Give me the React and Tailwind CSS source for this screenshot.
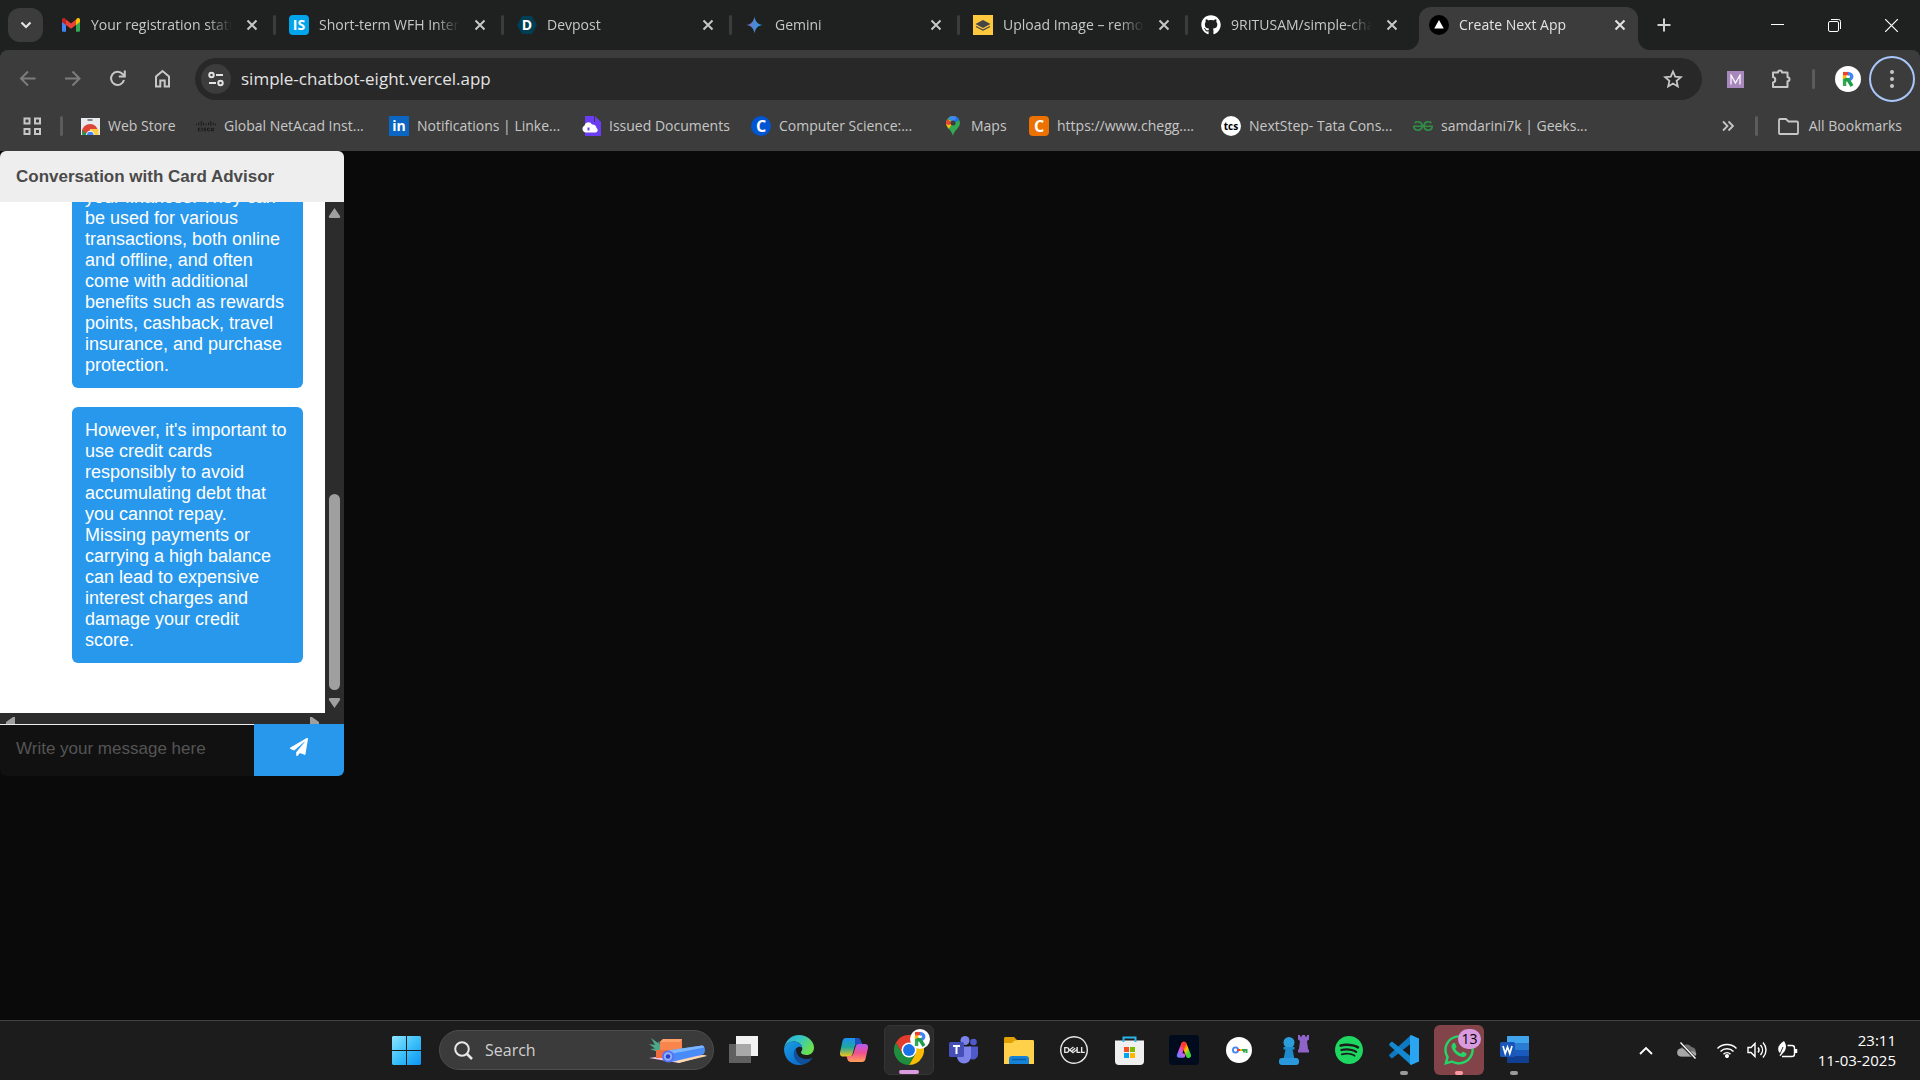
import { useState } from 'react';
import { FaGithub, FaPaperPlane, FaWhatsapp } from 'react-icons/fa';
import { SiCisco, SiDell, SiGeeksforgeeks, SiSpotify } from 'react-icons/si';

// ---------- small shared bits ----------

function CloseIcon({ className = '' }) {
  return (
    <svg width="12" height="12" viewBox="0 0 12 12" className={className} stroke="currentColor" strokeWidth="2">
      <path d="M1.5 1.5l9 9M10.5 1.5l-9 9" />
    </svg>
  );
}

function LetterIcon({ letter, className = '' }) {
  return (
    <span className={`flex size-5 items-center justify-center font-bold leading-none text-white ${className}`}>
      {letter}
    </span>
  );
}

function ChromeLogo({ size = 30 }) {
  return (
    <svg width={size} height={size} viewBox="0 0 48 48">
      <path d="M24 12H44.8A24 24 0 0 1 24 48L34.4 30z" fill="#fbbc04" />
      <path d="M13.6 30L3.2 12A24 24 0 0 0 24 48L34.4 30z" fill="#1e8e3e" />
      <path d="M3.2 12A24 24 0 0 1 44.8 12H24L13.6 30z" fill="#e33b2e" />
      <circle cx="24" cy="24" r="12" fill="#fff" />
      <circle cx="24" cy="24" r="9.5" fill="#1a73e8" />
    </svg>
  );
}

function ProfileBadge({ className = '' }) {
  return (
    <span className={`flex items-center justify-center rounded-full bg-white ${className}`}>
      <svg width="12" height="16" viewBox="0 0 12 16" fill="none" strokeWidth="3.4">
        <path d="M2.6 15V6" stroke="#34a853" />
        <path d="M2.6 8V2" stroke="#fbbc04" />
        <path d="M1 2.6h6" stroke="#ea4335" />
        <path d="M6 2.6c5 0 5 6 0 6" stroke="#4285f4" />
        <path d="M2.6 8.8H6l4 6.2" stroke="#1e9e4a" />
      </svg>
    </span>
  );
}

// ---------- tab strip ----------

function GmailIcon() {
  return (
    <svg width="20" height="20" viewBox="0 0 20 20">
      <path d="M1 5v10.5c0 .8.5 1.3 1.3 1.3H5V8z" fill="#4285f4" />
      <path d="M19 5v10.5c0 .8-.5 1.3-1.3 1.3H15V8z" fill="#34a853" />
      <path d="M15 4.8V10l4-3V5c0-2-2-2.5-3.2-1.5z" fill="#fbbc04" />
      <path d="M1 7l4 3V4.8l-.8-1.3C3 2.5 1 3 1 5z" fill="#c5221f" />
      <path d="M5 10V4.600l5 3.800 5-3.800V10l-5 3.800z" fill="#ea4335" />
    </svg>
  );
}

function DevpostIcon() {
  return (
    <svg width="20" height="20" viewBox="0 0 20 20">
      <path d="M5 1h10l5 9-5 9H5l-5-9z" fill="#003e54" />
      <text x="10" y="15" textAnchor="middle" fontFamily="Open Sans" fontWeight="700" fontSize="14" fill="#fff">D</text>
    </svg>
  );
}

function GeminiIcon() {
  return (
    <svg width="20" height="20" viewBox="0 0 20 20">
      <defs>
        <linearGradient id="gemini" x1="0" x2="1">
          <stop offset="0" stopColor="#9168c0" />
          <stop offset=".4" stopColor="#5684d1" />
          <stop offset="1" stopColor="#1ba1e3" />
        </linearGradient>
      </defs>
      <path d="M9.5 1.5c.6 5 3.5 8 8.5 8.5-5 .5-7.9 3.5-8.5 8.5C8.900 13.500 6 10.500 1 10c5-.5 7.900-3.500 8.500-8.500z" fill="url(#gemini)" />
    </svg>
  );
}

function LayersIcon() {
  return (
    <svg width="20" height="20" viewBox="0 0 20 20">
      <path d="M0 0h20v20H0z" fill="#ffc83d" />
      <path d="M10 5l7.5 4-7.5 4-7.5-4z" fill="#454545" />
      <path d="M3 11.5l7 3.500 7-3.500" fill="none" stroke="#454545" strokeWidth="1.2" />
    </svg>
  );
}

function NextIcon() {
  return (
    <svg width="20" height="20" viewBox="0 0 20 20">
      <circle cx="10" cy="10" r="10" fill="#000" />
      <path d="M10 5l4.800 8.500H5.200z" fill="#fff" />
    </svg>
  );
}

const tabs = [
  { title: 'Your registration status', icon: <GmailIcon /> },
  { title: 'Short-term WFH Intern', icon: <LetterIcon letter="IS" className="rounded bg-[#00a5ec] text-sm" /> },
  { title: 'Devpost', icon: <DevpostIcon /> },
  { title: 'Gemini', icon: <GeminiIcon /> },
  { title: 'Upload Image – remo', icon: <LayersIcon /> },
  { title: '9RITUSAM/simple-cha', icon: <FaGithub size={20} className="text-white" /> },
  { title: 'Create Next App', icon: <NextIcon />, active: true },
];

function Tab({ title, icon, active, last }) {
  return (
    <div className="relative flex h-[43px] w-[228px] min-w-0 items-center pl-[3px]">
      {active && (
        <>
          <svg width="12" height="12" viewBox="0 0 12 12" className="absolute bottom-0 -left-[9px]">
            <path d="M12 0v12H0A12 12 0 0 0 12 0z" fill="#3c3c3c" />
          </svg>
          <svg width="12" height="12" viewBox="0 0 12 12" className="absolute bottom-0 -right-[6px]">
            <path d="M0 0v12h12A12 12 0 0 1 0 0z" fill="#3c3c3c" />
          </svg>
        </>
      )}
      <div className={`flex h-full w-[219px] items-center pr-2 pb-[7px] pl-[10px] ${active ? 'rounded-t-xl bg-[#3c3c3c] text-[#e3e3e3]' : 'text-[#c7c7c7]'}`}>
        <span className="w-5 shrink-0">{icon}</span>
        <span className="ml-[10px] w-[141px] overflow-hidden text-sm whitespace-nowrap [mask-image:linear-gradient(to_right,black_82%,transparent)]">
          {title}
        </span>
        <button aria-label="Close tab" className="ml-auto flex size-5 items-center justify-center">
          <CloseIcon />
        </button>
      </div>
      {!active && !last && <span className="mb-2 ml-auto h-5 w-[3px] shrink-0 rounded bg-[#3c3c3c]" />}
    </div>
  );
}

function TabStrip() {
  return (
    <div className="flex h-[50px] items-end bg-[#1f2120]">
      <button aria-label="Search tabs" className="mr-[5px] mb-2 ml-2 flex h-[34px] w-[35px] shrink-0 items-center justify-center rounded-xl bg-[#3c3c3c] text-[#e3e3e3]">
        <svg width="12" height="8" viewBox="0 0 12 8" fill="none" stroke="currentColor" strokeWidth="2.2">
          <path d="M1.5 1.5L6 6l4.500-4.500" />
        </svg>
      </button>
      {tabs.map((t, i) => (
        <Tab key={t.title} {...t} last={i === 5} />
      ))}
      <button aria-label="New tab" className="mb-2 ml-[3px] flex size-[34px] shrink-0 items-center justify-center text-[#d0d0d0]">
        <svg width="14" height="14" viewBox="0 0 14 14" stroke="currentColor" strokeWidth="2">
          <path d="M7 .5v13M.5 7h13" />
        </svg>
      </button>
      <div className="ml-auto flex h-full items-center text-white">
        <button aria-label="Minimize" className="flex h-full w-[57px] items-center justify-center">
          <svg width="13" height="13" viewBox="0 0 13 13" stroke="currentColor"><path d="M0 5.500h13" /></svg>
        </button>
        <button aria-label="Restore" className="flex h-full w-[57px] items-center justify-center">
          <svg width="13" height="13" viewBox="0 0 13 13" fill="none" stroke="currentColor">
            <rect x=".5" y="2.5" width="10" height="10" rx="1.5" />
            <path d="M3 .5h7.500a2 2 0 0 1 2 2V10" />
          </svg>
        </button>
        <button aria-label="Close window" className="flex h-full w-[57px] items-center justify-center">
          <svg width="13" height="13" viewBox="0 0 13 13" stroke="currentColor" strokeWidth="1.2"><path d="M0 0l13 13M13 0L0 13" /></svg>
        </button>
      </div>
    </div>
  );
}

// ---------- toolbar ----------

function NavButton({ label, dim, children }) {
  return (
    <button
      aria-label={label}
      className={`flex h-11 w-[45px] shrink-0 items-center justify-center ${dim ? 'text-[#7c7c7c]' : 'text-[#c7c7c7]'}`}
    >
      <svg width="20" height="20" viewBox="0 0 20 20" fill="none" stroke="currentColor" strokeWidth="2">
        {children}
      </svg>
    </button>
  );
}

function AddressRow() {
  const [url, setUrl] = useState('simple-chatbot-eight.vercel.app');
  return (
    <div className="flex h-[58px] items-center px-[5px]">
      <NavButton label="Back" dim><path d="M17.5 9.500H4M10 2.500l-7 7 7 7" /></NavButton>
      <NavButton label="Forward" dim><path d="M2 9.500H15.500M9.500 2.500l7 7-7 7" /></NavButton>
      <NavButton label="Reload">
        <path d="M16 11A6.600 6.600 0 1 1 14.600 5L16.300 6.500" />
        <path d="M16.800 1.500v6h-6" />
      </NavButton>
      <NavButton label="Home"><path d="M3 17.500V7.500L9.500 2l6.500 5.500v10h-4.300v-6H7.300v6z" /></NavButton>

      <div className="ml-[10px] flex h-[42px] flex-1 items-center rounded-full bg-[#282828] px-[6px]">
        <button aria-label="View site information" className="flex size-[30px] shrink-0 items-center justify-center rounded-full bg-[#3c3c3c] text-[#e3e3e3]">
          <svg width="16" height="16" viewBox="0 0 16 16" fill="none" stroke="currentColor" strokeWidth="2">
            <circle cx="3.5" cy="4" r="2.200" />
            <path d="M8 4h7M1 12h7" />
            <circle cx="12.5" cy="12" r="2.200" />
          </svg>
        </button>
        <input
          aria-label="Address and search bar"
          value={url}
          onChange={(e) => setUrl(e.target.value)}
          className="ml-[10px] flex-1 bg-transparent text-[17px] text-[#e3e3e3] outline-none"
        />
        <button aria-label="Bookmark this tab" className="mr-3 flex size-[22px] items-center justify-center text-[#c7c7c7]">
          <svg width="20" height="20" viewBox="0 0 20 20" fill="none" stroke="currentColor" strokeWidth="1.8">
            <path d="M10 2.500l2.200 5.200 5.600.5-4.200 3.700 1.200 5.500-4.800-2.900-4.800 2.900 1.200-5.500L2.200 8.200l5.600-.5z" />
          </svg>
        </button>
      </div>

      <button aria-label="Mail extension" className="ml-[11px] flex h-11 w-[45px] items-center justify-center">
        <span className="flex size-[17px] items-center justify-center bg-[#a887bd]">
          <svg width="11" height="11" viewBox="0 0 11 11" fill="none" stroke="#fff" strokeWidth="1.2">
            <path d="M1 10.500V1l4.500 8L10 1v9.500" />
          </svg>
        </span>
      </button>
      <NavButton label="Extensions">
        <path d="M2 3.500h5a2 2 0 0 1 4 0h5.500v4.700a2 2 0 0 1 0 4V18H2v-4.500a2.800 2.800 0 0 0 0-5.500z" strokeLinejoin="round" />
      </NavButton>
      <span className="ml-[9px] h-5 w-[3px] rounded bg-[#5c5c5c]" />
      <button aria-label="Profile" className="ml-5">
        <ProfileBadge className="size-[26px]" />
      </button>
      <button aria-label="Menu" className="ml-2 flex size-[46px] items-center justify-center rounded-full border-2 border-[#a8c7fa] text-[#c7c7c7]">
        <svg width="4" height="18" viewBox="0 0 4 18" fill="currentColor">
          <circle cx="2" cy="2" r="2" />
          <circle cx="2" cy="9" r="2" />
          <circle cx="2" cy="16" r="2" />
        </svg>
      </button>
    </div>
  );
}

function WebStoreIcon() {
  return (
    <svg width="20" height="20" viewBox="0 0 20 20">
      <path d="M1 2h19v17H1z" fill="#e8eaed" />
      <path d="M7.5 4h5" stroke="#5f6368" strokeWidth="1.5" />
      <path d="M2.500 19a8 8 0 0 1 15-6h-7L7 19z" fill="#db4437" />
      <path d="M10 13h8.500v6H12z" fill="#ffcd40" />
      <path d="M2.500 14l5 5h-5z" fill="#0f9d58" />
      <path d="M6 19a4.300 4.300 0 0 1 8.600 0z" fill="#fff" />
      <path d="M7 19a3.300 3.300 0 0 1 6.600 0z" fill="#4285f4" />
    </svg>
  );
}

function IssuedIcon() {
  return (
    <svg width="20" height="20" viewBox="0 0 20 20">
      <path d="M4 0h9v6h7v14H4z" fill="#6a3cf4" />
      <path d="M14 0l6 6h-6z" fill="#6a3cf4" />
      <path d="M4 16.500a3.800 3.800 0 0 1-.5-7A4 4 0 0 1 11 8.500a4 4 0 0 1 4.500 3.500 2.500 2.500 0 0 1-.5 4.500z" fill="#fff" />
      <path d="M6.500 11.500h2v3h-2z" fill="#6a3cf4" />
    </svg>
  );
}

function MapsIcon() {
  return (
    <svg width="20" height="20" viewBox="0 0 20 20">
      <defs>
        <clipPath id="pin"><path d="M10 0a7 7 0 0 0-7 7c0 5 6 7 7 13 1-6 7-8 7-13a7 7 0 0 0-7-7z" /></clipPath>
      </defs>
      <g clipPath="url(#pin)">
        <path d="M0 0h20v20H0z" fill="#34a853" />
        <path d="M0 6l7-2 3 3-6 8-4-4z" fill="#fbbc04" />
        <path d="M2 2l8 5-4 2-4-1z" fill="#ea4335" />
        <path d="M4 0h12l-1 4-5 3z" fill="#4285f4" />
        <path d="M17 4l-7 3 4-6z" fill="#1a73e8" />
      </g>
      <circle cx="10" cy="7" r="2.5" fill="#3c3c3c" />
    </svg>
  );
}

const bookmarks = [
  { label: 'Web Store', width: 'w-[116px]', icon: <WebStoreIcon /> },
  { label: 'Global NetAcad Inst...', width: 'w-[193px]', icon: <SiCisco size={20} className="text-[#141414]" /> },
  { label: 'Notifications | Linke...', width: 'w-[192px]', icon: <LetterIcon letter="in" className="bg-[#0a66c2] text-sm" /> },
  { label: 'Issued Documents', width: 'w-[170px]', icon: <IssuedIcon /> },
  { label: 'Computer Science:...', width: 'w-[192px]', icon: <LetterIcon letter="C" className="rounded-full bg-[#0056d2] text-base" /> },
  { label: 'Maps', width: 'w-[86px]', icon: <MapsIcon /> },
  { label: 'https://www.chegg....', width: 'w-[192px]', icon: <LetterIcon letter="C" className="rounded bg-[#eb7100] text-base" /> },
  {
    label: 'NextStep- Tata Cons...',
    width: 'w-[192px]',
    icon: (
      <span className="flex size-5 items-center justify-center rounded-full bg-white text-[10px] leading-none font-bold text-black">
        tcs
      </span>
    ),
  },
  { label: 'samdarini7k | Geeks...', width: 'w-[180px]', icon: <SiGeeksforgeeks size={20} className="text-[#2f8d46]" /> },
];

function BookmarksRow() {
  return (
    <nav aria-label="Bookmarks" className="flex h-9 items-center pr-[18px] pl-[23px] text-sm text-[#c7c7c7]">
      <button aria-label="Apps" className="shrink-0">
        <svg width="19" height="19" viewBox="0 0 19 19" fill="none" stroke="currentColor" strokeWidth="2">
          <path d="M1.500 1.500h5v5h-5zM12 1.500h5v5h-5zM1.500 12h5v5h-5zM12 12h5v5h-5z" />
        </svg>
      </button>
      <span className="mr-[17px] ml-[18px] h-5 w-[3px] shrink-0 rounded bg-[#5c5c5c]" />
      {bookmarks.map((b) => (
        <a key={b.label} href="#" className={`flex min-w-0 items-center gap-2 whitespace-nowrap ${b.width}`}>
          <span className="w-5 shrink-0">{b.icon}</span>
          {b.label}
        </a>
      ))}
      <button aria-label="More bookmarks" className="ml-auto">
        <svg width="12" height="12" viewBox="0 0 12 12" fill="none" stroke="currentColor" strokeWidth="1.8">
          <path d="M1 1.500L5.500 6 1 10.500M6.500 1.500L11 6l-4.500 4.500" />
        </svg>
      </button>
      <span className="mr-5 ml-[21px] h-5 w-[3px] shrink-0 rounded bg-[#5c5c5c]" />
      <a href="#" className="flex items-center gap-[10px] whitespace-nowrap">
        <svg width="21" height="17" viewBox="0 0 21 17" fill="none" stroke="currentColor" strokeWidth="1.8" strokeLinejoin="round">
          <path d="M1 15V2a1 1 0 0 1 1-1h6l2.500 2.500H19a1 1 0 0 1 1 1V15a1 1 0 0 1-1 1H2a1 1 0 0 1-1-1z" />
        </svg>
        All Bookmarks
      </a>
    </nav>
  );
}

// ---------- chat widget ----------

const messages = [
  'your finances. They can be used for various transactions, both online and offline, and often come with additional benefits such as rewards points, cashback, travel insurance, and purchase protection.',
  "However, it's important to use credit cards responsibly to avoid accumulating debt that you cannot repay. Missing payments or carrying a high balance can lead to expensive interest charges and damage your credit score.",
];

function ChatWidget() {
  const [text, setText] = useState('');
  return (
    <section className="w-[344px] overflow-hidden rounded-md font-['Liberation_Sans',Arial,sans-serif]">
      <header className="flex h-[51px] items-center bg-[#eee] px-4">
        <h1 className="text-[17px] font-bold text-[#4a4a4a]">Conversation with Card Advisor</h1>
      </header>

      <div className="flex h-[511px]">
        {/* pinned to the newest message, older lines slide under the header */}
        <div className="flex flex-1 flex-col justify-end gap-[19px] overflow-hidden bg-white pr-[22px] pb-[50px] pl-[72px]">
          {messages.map((m) => (
            <p key={m} className="shrink-0 rounded-md bg-[#2898ec] px-[13px] pt-[13px] pb-3 text-lg leading-[21px] text-white">
              {m}
            </p>
          ))}
        </div>
        <div className="flex w-[19px] flex-col items-center bg-[#2c2c2c] pt-[5px] pb-[5px]">
          <svg width="13" height="12" viewBox="0 0 13 12" fill="#9f9f9f"><path d="M6.500 1l5.500 8c.5 1 0 2-1 2H2C1 11 .5 10 1 9z" /></svg>
          <span className="mt-auto mb-2 h-[196px] w-[11px] rounded-full bg-[#9f9f9f]" />
          <svg width="13" height="10" viewBox="0 0 13 10" fill="#9f9f9f"><path d="M6.500 10L1 2C.5 1 1 0 2 0h9c1 0 1.500 1 1 2z" /></svg>
        </div>
      </div>
      <div className="flex h-[11px] items-end justify-between bg-[#2c2c2c] pr-[25px] pl-[6px]">
        <svg width="9" height="7" viewBox="0 0 9 7" fill="#9f9f9f"><path d="M9 0v7H0V5l7-5z" /></svg>
        <svg width="9" height="7" viewBox="0 0 9 7" fill="#9f9f9f"><path d="M0 0v7h9V5L2 0z" /></svg>
      </div>

      <form className="flex h-[52px]" onSubmit={(e) => e.preventDefault()}>
        <input
          aria-label="Message"
          value={text}
          onChange={(e) => setText(e.target.value)}
          placeholder="Write your message here"
          className="min-w-0 flex-1 rounded-bl-md border-t border-[#eee] bg-[#111] px-4 pb-[3px] text-[17px] text-white outline-none placeholder:text-[#555]"
        />
        <button aria-label="Send" className="flex w-[90px] items-center justify-center bg-[#2898ec] pb-[6px] text-white">
          <FaPaperPlane size={18} />
        </button>
      </form>
    </section>
  );
}

// ---------- taskbar ----------

function StartIcon() {
  return (
    <svg width="29" height="29" viewBox="0 0 29 29">
      <defs>
        <linearGradient id="start" x1="0" y1="0" x2="1" y2="1">
          <stop offset="0" stopColor="#8ee4ff" />
          <stop offset=".5" stopColor="#3cc0f9" />
          <stop offset="1" stopColor="#0a95f5" />
        </linearGradient>
      </defs>
      <path d="M1 0h13v14H0V1zM15 0h13l1 1v13H15zM0 15h14v14H1l-1-1zM15 15h14v13l-1 1H15z" fill="url(#start)" />
    </svg>
  );
}

function SearchArt() {
  return (
    <svg width="60" height="28" viewBox="0 0 60 28">
      <path d="M1 22l14-2 44-1-28 8z" fill="#f1c6e7" />
      <path d="M30 27l29-7-3-1-28 6z" fill="#ffd9a8" />
      <path d="M10 16L2 13l5-.5L1 8l6 1-4-7 7 5 1-2 3 12z" fill="#4da88a" />
      <path d="M8 14h18v8H8z" fill="#ef6c3f" />
      <path d="M12 6l3-3h19v11H12z" fill="#f9854c" />
      <path d="M12 6l3-3h19l-2 3z" fill="#ffa168" />
      <path d="M20 14.500l34-5c3.500 0 4 7 1 9l-34 8z" fill="#4a8cf7" />
      <path d="M20 14.500l34-5c1 0 2 1 2.300 2L22 18z" fill="#7bb8ff" />
      <circle cx="20" cy="20.500" r="6" fill="#5a6ff0" />
      <circle cx="20" cy="20.500" r="4.200" fill="#8fb2ff" />
      <circle cx="20" cy="20.500" r="2.300" fill="#2b3fc4" />
    </svg>
  );
}

function TaskViewIcon() {
  return (
    <svg width="30" height="28" viewBox="0 0 30 28">
      <path d="M0 8h22v19H0z" fill="#606060" />
      <path d="M7 0h22v20H7z" fill="#f2f2f2" />
      <path d="M7 8h15v12H7z" fill="#a9a9a9" />
    </svg>
  );
}

function EdgeIcon() {
  return (
    <svg width="30" height="30" viewBox="0 0 30 30">
      <defs>
        <linearGradient id="edgeTop" x1="0" y1="0" x2="1" y2=".5">
          <stop offset="0" stopColor="#2aa9e0" />
          <stop offset=".5" stopColor="#35c5c5" />
          <stop offset="1" stopColor="#6be04f" />
        </linearGradient>
        <linearGradient id="edgeLeft" x1="0" y1="0" x2=".6" y2="1">
          <stop offset="0" stopColor="#1b9de2" />
          <stop offset="1" stopColor="#0c6fd0" />
        </linearGradient>
      </defs>
      <path d="M0 14C1 6 7 0 15 0s15 6 15 12.500c0 5-3.500 7.500-7.500 7.500-3 0-5.500-1-5.500-2.500 0-1 1.300-1.500 1.300-4C18 9 14 6.500 9.500 6.500 5 6.500 1 9.500 0 14z" fill="url(#edgeTop)" />
      <path d="M0 14c1-4.500 5-7.500 9.500-7.500 4.500 0 8.800 2.500 8.800 6.500-2-2.500-7-1-7.300 4C10.500 23 15 29 20 29a15 15 0 0 1-5 1C6.500 30 0 23 0 14z" fill="url(#edgeLeft)" />
      <path d="M12 13c-5 6-1 14 6 16.500C23 29 27 26 28.500 22.500c-4 2.500-11 2-14-1.500-2-2.500-2.500-5.500-2.500-8z" fill="#114f99" />
    </svg>
  );
}

function CopilotIcon() {
  return (
    <svg width="28" height="26" viewBox="0 0 28 26">
      <defs>
        <linearGradient id="cpA" x1="0" y1="0" x2="0" y2="1">
          <stop offset="0" stopColor="#1b8ff0" />
          <stop offset=".5" stopColor="#1fa7a0" />
          <stop offset="1" stopColor="#f5c518" />
        </linearGradient>
        <linearGradient id="cpB" x1="0" y1="0" x2="0" y2="1">
          <stop offset="0" stopColor="#b05cf5" />
          <stop offset=".5" stopColor="#f0508f" />
          <stop offset="1" stopColor="#ffa055" />
        </linearGradient>
      </defs>
      <path d="M6 1h11c2 0 3 1 3.500 2.500L22 7h-4c-2 0-3 1-3.500 3l-2 7c-.5 1.500-1.500 2.500-3 2.500H3c-2.500 0-3.500-2-3-4L2.500 4C3 2 4 1 6 1z" fill="url(#cpA)" />
      <path d="M15 1h2c2 0 3 1 3.500 2.500L22 7h-4c-1.500 0-2.500.5-3 2z" fill="#1c4fc0" />
      <path d="M22 25H11c-2 0-3-1-3.500-2.500L6.500 19H10c2 0 3-1 3.500-3l2-6c.5-2 1.500-3 3-3H25c2.500 0 3.500 2 3 4l-2.500 11c-.5 2-1.500 3-3.500 3z" fill="url(#cpB)" />
    </svg>
  );
}

function TeamsIcon() {
  return (
    <svg width="30" height="28" viewBox="0 0 30 28">
      <circle cx="24.500" cy="6" r="3.300" fill="#5059c9" />
      <path d="M20 10.500h9v8a5 5 0 0 1-8 4z" fill="#5059c9" />
      <circle cx="16" cy="4.500" r="4.500" fill="#7b83eb" />
      <path d="M8 10.500h14v10a7 7 0 0 1-14 0z" fill="#7b83eb" />
      <rect x="0" y="6" width="15" height="15" rx="1.500" fill="#464eb8" />
      <path d="M4 10h7M7.500 10v8" stroke="#fff" strokeWidth="2" />
    </svg>
  );
}

function ExplorerIcon() {
  return (
    <svg width="30" height="27" viewBox="0 0 30 27">
      <path d="M0 1.500C0 .5.5 0 1.500 0H10l3 3-3 3H0z" fill="#e0a100" />
      <path d="M10 4l3-1h15.500c1 0 1.500.5 1.500 1.500V27H0V6h8z" fill="#ffd04a" />
      <path d="M5 27v-5c0-2 1-3 3-3h14c2 0 3 1 3 3v5z" fill="#1583d8" />
      <path d="M8 22.500h14" stroke="#0b5da8" strokeWidth="1.500" />
    </svg>
  );
}

function StoreIcon() {
  return (
    <svg width="29" height="29" viewBox="0 0 29 29">
      <path d="M0 4.500h29V25a4 4 0 0 1-4 4H4a4 4 0 0 1-4-4z" fill="#efefef" />
      <path d="M8.500 6V1.500h12V6" fill="none" stroke="#28b4e8" strokeWidth="2" />
      <path d="M9 11h5v5H9z" fill="#f25022" />
      <path d="M15 11h5v5h-5z" fill="#7fba00" />
      <path d="M9 17h5v5H9z" fill="#00a4ef" />
      <path d="M15 17h5v5h-5z" fill="#ffb900" />
    </svg>
  );
}

function AdobeIcon() {
  return (
    <svg width="30" height="30" viewBox="0 0 30 30">
      <defs>
        <linearGradient id="adobeL" x1=".5" y1="0" x2="0" y2="1">
          <stop offset="0" stopColor="#ff3b30" />
          <stop offset=".5" stopColor="#e055e8" />
          <stop offset="1" stopColor="#6f7bff" />
        </linearGradient>
        <linearGradient id="adobeR" x1="0" y1="0" x2=".6" y2="1">
          <stop offset="0" stopColor="#ff2a2a" />
          <stop offset=".6" stopColor="#ffc400" />
          <stop offset="1" stopColor="#3fd43f" />
        </linearGradient>
      </defs>
      <rect width="30" height="30" rx="4" fill="#000b1d" />
      <path d="M15 9l4.500 11.500" stroke="url(#adobeR)" strokeWidth="5" strokeLinecap="round" />
      <path d="M14.500 9L10 20.500h4" fill="none" stroke="url(#adobeL)" strokeWidth="4.500" strokeLinecap="round" strokeLinejoin="round" />
    </svg>
  );
}

function KeyIcon() {
  return (
    <svg width="26" height="26" viewBox="0 0 26 26">
      <circle cx="13" cy="13" r="13" fill="#fff" />
      <circle cx="9.500" cy="13" r="2.600" fill="none" stroke="#4285f4" strokeWidth="1.800" />
      <path d="M11 13h4" stroke="#ea4335" strokeWidth="2" />
      <path d="M14 13h3" stroke="#fbbc04" strokeWidth="2" />
      <path d="M16 13h4.500v3M18 13v2.500" stroke="#34a853" strokeWidth="2" fill="none" />
    </svg>
  );
}

function ChessIcon() {
  return (
    <svg width="30" height="30" viewBox="0 0 30 30">
      <path d="M19 0h2v1.500h2V0h3v1.500h2V0h2v4.500L28 6l1 8 1 1v2.500H19V15l1-1 1-8-2-1.500z" fill="#8f63c8" />
      <circle cx="10" cy="7.500" r="5.500" fill="#2b9ddb" />
      <path d="M4.500 12h11v2.500h-2l2 9.500h-11l2-9.500h-2z" fill="#1f8acb" />
      <rect x="0" y="23" width="20" height="7" rx="3" fill="#2a98dc" />
    </svg>
  );
}

function VSCodeIcon() {
  return (
    <svg width="30" height="30" viewBox="0 0 30 30">
      <path d="M22 0L0 20l1 2 2 1.500 19-15z" fill="#0d79c2" />
      <path d="M22 30L0 10l1-2 2-1.500 19 15z" fill="#1488d0" />
      <path d="M22 0l8 3.500v23L22 30l-1-1V1z" fill="#2aa5f2" />
    </svg>
  );
}

function WordIcon() {
  return (
    <svg width="29" height="28" viewBox="0 0 29 28">
      <path d="M7 1c0-.6.4-1 1-1h20c.6 0 1 .4 1 1v6H7z" fill="#41a5ee" />
      <path d="M7 7h22v7H7z" fill="#2b7cd3" />
      <path d="M7 14h22v6H7z" fill="#185abd" />
      <path d="M7 20h22v6c0 .6-.4 1-1 1H8c-.6 0-1-.4-1-1z" fill="#103f91" />
      <rect x="0" y="6" width="15" height="15" rx="1.500" fill="#1a56b8" />
      <path d="M3 10l2.200 7.500L7.500 11l2.300 6.500L12 10" fill="none" stroke="#fff" strokeWidth="1.700" />
    </svg>
  );
}

const apps = [
  { name: 'Task View', icon: <TaskViewIcon /> },
  { name: 'Edge', icon: <EdgeIcon /> },
  { name: 'Copilot', icon: <CopilotIcon /> },
  {
    name: 'Chrome',
    icon: <ChromeLogo />,
    tile: 'bg-[#2b2b2b] border border-[#353535]',
    mark: 'w-5 bg-[#d99ae0]',
    badge: <ProfileBadge className="absolute top-[3px] right-[3px] size-5" />,
  },
  { name: 'Teams', icon: <TeamsIcon /> },
  { name: 'File Explorer', icon: <ExplorerIcon /> },
  { name: 'Dell', icon: <SiDell size={28} className="text-[#e8e8e8]" /> },
  { name: 'Microsoft Store', icon: <StoreIcon /> },
  { name: 'Adobe', icon: <AdobeIcon /> },
  { name: 'Password Manager', icon: <KeyIcon /> },
  { name: 'Chess', icon: <ChessIcon /> },
  { name: 'Spotify', icon: <SiSpotify size={28} className="text-[#1ed760]" /> },
  { name: 'VS Code', icon: <VSCodeIcon />, mark: 'w-2 bg-[#9a9a9a]' },
  {
    name: 'WhatsApp',
    icon: <FaWhatsapp size={34} className="text-[#25d366]" />,
    tile: 'bg-[#834449]',
    mark: 'w-2 bg-[#ff99a4]',
    badge: (
      <span className="absolute top-1 right-[3px] flex h-5 w-[23px] items-center justify-center rounded-full bg-[#d99ae0] text-sm text-black">
        13
      </span>
    ),
  },
  { name: 'Word', icon: <WordIcon />, mark: 'w-2 bg-[#9a9a9a]' },
];

function AppTile({ name, icon, tile = '', mark, badge }) {
  return (
    <button aria-label={name} className={`relative flex size-[50px] items-center justify-center rounded-md ${tile}`}>
      {icon}
      {badge}
      {mark && <span className={`absolute bottom-0 left-1/2 h-1 -translate-x-1/2 rounded-full ${mark}`} />}
    </button>
  );
}

function Tray() {
  return (
    <div className="flex items-center justify-end pr-6 text-white">
      <button aria-label="Show hidden icons" className="mr-6">
        <svg width="14" height="9" viewBox="0 0 14 9" fill="none" stroke="currentColor" strokeWidth="1.800"><path d="M1 8l6-6 6 6" /></svg>
      </button>
      <svg width="20" height="17" viewBox="0 0 20 17" className="mr-5">
        <path d="M4 14.500a4 4 0 0 1 0-8A6 6 0 0 1 14.500 5a5 5 0 0 1 1.500 9.500z" fill="#6e6e6e" />
        <path d="M4 14.500a4 4 0 0 1 1-8c3 0 4 1.500 6 2.500s5-1 8 2c1 2-1 3.500-3 3.500z" fill="#a6a6a6" />
        <path d="M2.500 .5l16 16" stroke="#1c1c1c" strokeWidth="3" />
        <path d="M3.500 .5l15 16" stroke="#fff" strokeWidth="1.300" />
      </svg>
      <button aria-label="Network, volume and battery" className="mr-5 flex items-center gap-[10px]">
        <svg width="20" height="16" viewBox="0 0 20 16" fill="none" stroke="currentColor" strokeWidth="1.500">
          <path d="M.5 6.500a13.400 13.400 0 0 1 19 0M3.500 9.500a9.200 9.200 0 0 1 13 0M6.500 12.200a5 5 0 0 1 7 0" />
          <circle cx="10" cy="14" r="1.300" fill="currentColor" />
        </svg>
        <svg width="20" height="18" viewBox="0 0 20 18" fill="none" stroke="currentColor" strokeWidth="1.400">
          <path d="M1 6.500h3l4-4v13l-4-4H1zM11 6.500c1.300 1.500 1.300 3.500 0 5M13.500 4c2.700 3 2.700 7 0 10M16 1.500c4 4.500 4 10.500 0 15" />
        </svg>
        <svg width="21" height="18" viewBox="0 0 21 18" fill="none" stroke="currentColor" strokeWidth="1.400">
          <path d="M10.500 4.500H15A2.500 2.500 0 0 1 17.500 7v6a2.500 2.500 0 0 1-2.500 2.500H5" />
          <path d="M19 8v4" strokeWidth="2.500" />
          <path d="M7 0c3 4 2.500 9.500-1 12L3.500 15l-1-.5 1-2C-1 9 1.500 3 7 0z" fill="currentColor" stroke="none" />
          <path d="M6 6l-3 7" stroke="#1c1c1c" strokeWidth=".9" />
        </svg>
      </button>
      <time className="text-right text-[15px] leading-5">
        23:11
        <br />
        11-03-2025
      </time>
    </div>
  );
}

function Taskbar() {
  return (
    <footer className="grid h-[60px] grid-cols-[1fr_auto_1fr] items-center border-t border-[#424242] bg-[#1c1c1c] pb-px">
      <span />
      <div className="flex items-center gap-[5px]">
        <button aria-label="Start" className="mr-[3px] flex size-[50px] items-center justify-center">
          <StartIcon />
        </button>
        <label className="flex h-10 w-[275px] items-center rounded-full border border-[#4d4d4d] bg-[#3b3b3b] pr-[5px] pl-[14px]">
          <svg width="19" height="19" viewBox="0 0 19 19" fill="none" stroke="#e8e8e8" strokeWidth="2">
            <circle cx="8" cy="8" r="6.800" />
            <path d="M13 13l5 5" strokeWidth="2.500" />
          </svg>
          <input aria-label="Search" placeholder="Search" className="ml-3 min-w-0 flex-1 bg-transparent text-base text-white outline-none placeholder:text-[#d0d0d0]" />
          <SearchArt />
        </label>
        {apps.map((a) => (
          <AppTile key={a.name} {...a} />
        ))}
      </div>
      <Tray />
    </footer>
  );
}

export default function App() {
  return (
    <div className="flex min-h-screen flex-col bg-[#0a0a0a] font-['Open_Sans','Noto_Sans',sans-serif]">
      <div className="bg-[#1f2120]">
        <TabStrip />
        <div className="rounded-t-lg bg-[#3c3c3c] pb-[7px]">
          <AddressRow />
          <BookmarksRow />
        </div>
      </div>
      <main className="flex-1">
        <ChatWidget />
      </main>
      <Taskbar />
    </div>
  );
}
